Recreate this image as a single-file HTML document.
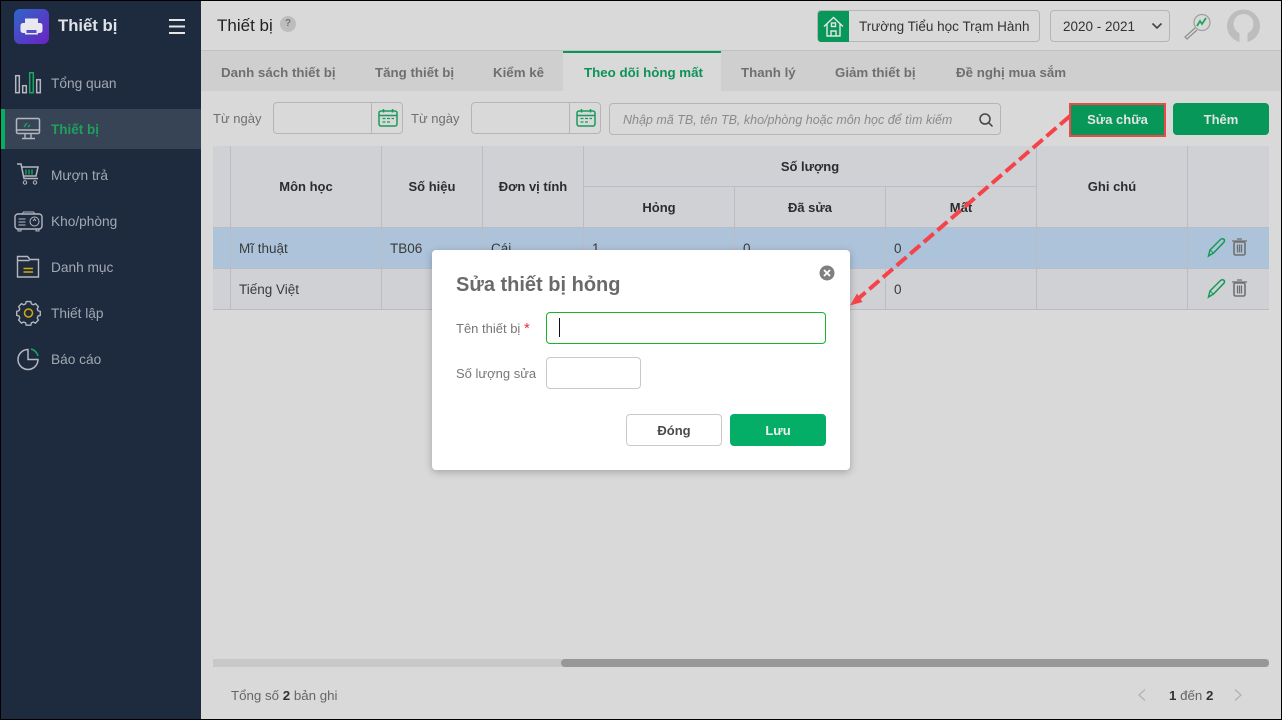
<!DOCTYPE html>
<html lang="vi"><head><meta charset="utf-8"><title>Thiết bị</title>
<style>
*{box-sizing:border-box}
html,body{margin:0;padding:0;width:1282px;height:720px;overflow:hidden;background:#d9d9d9;font-family:"Liberation Sans","DejaVu Sans",sans-serif;font-size:13.5px;color:#333}
.a{position:absolute;white-space:nowrap}
#side{position:absolute;left:1px;top:1px;width:200px;height:718px;background:#1e2b3f}
.m{position:absolute;left:51px;color:#a2a9b2;font-size:13.7px;line-height:18px;white-space:nowrap}
.ic{position:absolute;left:0;top:0}
.tab{position:absolute;top:64px;font-size:13.3px;font-weight:bold;color:#6f6f6f;line-height:18px;white-space:nowrap}
.inp{position:absolute;border:1px solid #b5b5b5;border-radius:4px;background:#d9d9d9}
.lbl{position:absolute;color:#6f6f6f;font-size:13px;line-height:18px;white-space:nowrap}
.v{position:absolute;background:#bdbcc6;width:1px}
.h{position:absolute;background:#bdbcc6;height:1px}
.th{position:absolute;font-weight:bold;color:#2c2c2c;font-size:13px;line-height:18px;text-align:center;white-space:nowrap}
.td{position:absolute;color:#3a3a3a;font-size:13.5px;line-height:18px;white-space:nowrap}
.btn{position:absolute;border-radius:4px;text-align:center;font-weight:bold;font-size:13px;color:#e4e4e4;background:#069759}
</style></head>
<body>
<div class="a" style="left:0;top:0;width:1282px;height:1px;background:#000"></div>
<div class="a" style="left:0;top:719px;width:1282px;height:1px;background:#000"></div>
<div class="a" style="left:0;top:0;width:1px;height:720px;background:#000"></div>
<div class="a" style="left:1281px;top:0;width:1px;height:720px;background:#000"></div>

<div id="side"></div>
<svg class="ic" width="201" height="380" viewBox="0 0 201 380" fill="none">
<defs><linearGradient id="g" x1="0" y1="0" x2="1" y2="1"><stop offset="0" stop-color="#2f66c8"/><stop offset="1" stop-color="#6a22c4"/></linearGradient></defs>
<rect x="14" y="9" width="35" height="35" rx="6" fill="url(#g)"/>
<path d="M25 24v-5.500h13V24z" fill="#e8e8ee"/>
<rect x="20.500" y="23" width="22" height="10" rx="2.500" fill="#e8e8ee"/>
<rect x="25" y="29" width="13" height="5.500" fill="#e8e8ee"/>
<rect x="26.500" y="30" width="10" height="3" fill="#5a4ec8"/>
<path d="M169 20h16M169 26.500h16M169 33h16" stroke="#e6e6e6" stroke-width="2"/>
<!-- Tong quan -->
<g stroke="#b4b8be" stroke-width="1.500">
<rect x="15.700" y="75.700" width="3.600" height="17"/><rect x="22.700" y="85.700" width="3.600" height="7"/><rect x="36.700" y="79.700" width="3.600" height="13"/>
</g>
<rect x="29.700" y="72.700" width="3.600" height="20" stroke="#1aa860" stroke-width="1.500"/>
<!-- active -->
<rect x="1" y="109" width="200" height="40" fill="#374455"/>
<rect x="1" y="109" width="4" height="40" fill="#06ad63"/>
<rect x="16.500" y="118.500" width="23" height="15" rx="1.500" stroke="#b4b8be" stroke-width="1.500"/>
<path d="M17 130h22M25 134v4M31 134v4M22 138.500h13" stroke="#b4b8be" stroke-width="1.400"/>
<path d="M24 127l3-4M28 127l2-2" stroke="#1aa860" stroke-width="1.400"/>
<!-- Muon tra -->
<path d="M17 164h4l3 14.500h14M22 167h16l-2 9H24" stroke="#b4b8be" stroke-width="1.500"/>
<circle cx="25" cy="182.500" r="1.700" stroke="#b4b8be"/><circle cx="35" cy="182.500" r="1.700" stroke="#b4b8be"/>
<path d="M26 169.500v5M29 169.500v5M32 169.500v5" stroke="#1aa860" stroke-width="1.400"/>
<!-- Kho/phong -->
<rect x="15" y="214" width="27" height="15" rx="3" stroke="#b4b8be" stroke-width="1.400"/>
<circle cx="34.500" cy="221.500" r="4.500" stroke="#b4b8be"/><path d="M33 221l1.500-2 1.500 2" stroke="#b4b8be"/>
<path d="M18.500 219h7M18.500 222h7M18.500 225h7M22 214l1.500-2h10l1.500 2M18 229.500v1.500h3v-1.500M36 229.500v1.500h3v-1.500" stroke="#b4b8be"/>
<!-- Danh muc -->
<path d="M17.500 277v-20.500h10l2.500 3h8.500V277zM17.500 260.500h12" stroke="#b4b8be" stroke-width="1.400"/>
<path d="M23.500 268.500h9.500M23.500 272h9.500" stroke="#d4a90c" stroke-width="1.400"/>
<!-- Thiet lap -->
<path d="M25 301.500h6l.8 3 2.600 1.200 2.800-1.500 3.800 4-1.500 2.700 1 2.600 3 .9v5.200l-3 .9-1 2.600 1.500 2.700-3.800 4-2.800-1.500-2.600 1.200-.8 3h-6l-.8-3-2.600-1.200-2.800 1.500-3.800-4 1.500-2.700-1-2.600-3-.9v-5.200l3-.9 1-2.600-1.500-2.700 3.800-4 2.800 1.500 2.600-1.200z" stroke="#b4b8be" stroke-width="1.800" transform="translate(28.5 313) scale(.76) translate(-28 -316.500)"/>
<circle cx="28.500" cy="313" r="4" stroke="#d4a90c" stroke-width="1.500"/>
<!-- Bao cao -->
<path d="M28 349.500a10 10 0 1 0 10 10H28z" stroke="#b4b8be" stroke-width="1.500"/>
<path d="M31 349a10 10 0 0 1 7 7" stroke="#1aa860" stroke-width="1.500"/>
</svg>
<div class="a" style="left:58px;top:14px;font-size:16.700px;font-weight:bold;color:#dfe3e8;line-height:24px">Thiết bị</div>
<div class="m" style="top:75px">Tổng quan</div>
<div class="m" style="top:121px;color:#1da15c;font-weight:bold;font-size:13.500px">Thiết bị</div>
<div class="m" style="top:167px">Mượn trả</div>
<div class="m" style="top:213px">Kho/phòng</div>
<div class="m" style="top:259px">Danh mục</div>
<div class="m" style="top:305px">Thiết lập</div>
<div class="m" style="top:351px">Báo cáo</div>

<!-- Header -->
<div class="a" style="left:217px;top:14px;font-size:17px;color:#222;line-height:24px">Thiết bị</div>
<div class="a" style="left:280px;top:16px;width:16px;height:16px;border-radius:50%;background:#bdbdbd;color:#757575;font-size:10px;font-weight:bold;text-align:center;line-height:16px">?</div>

<div class="a" style="left:817px;top:10px;width:223px;height:32px;border:1px solid #b5b5b5;border-radius:4px"></div>
<div class="a" style="left:818px;top:11px;width:31px;height:31px;background:#069759;border-radius:3px 0 0 3px"></div>
<svg class="a" style="left:818px;top:11px" width="31" height="31" fill="none" stroke="#e6e6e6" stroke-width="1.400"><path d="M6 15.500L15.500 6.500 25 15.500M9 13v12h13V13M13 25v-5h5v5"/><rect x="13.500" y="12" width="4" height="3.500"/></svg>
<div class="a" style="left:859px;top:18px;font-size:13.500px;line-height:18px;color:#333">Trường Tiểu học Trạm Hành</div>

<div class="a" style="left:1050px;top:10px;width:120px;height:32px;border:1px solid #b5b5b5;border-radius:4px"></div>
<div class="a" style="left:1063px;top:18px;font-size:13.500px;line-height:18px;color:#333">2020 - 2021</div>
<svg class="a" style="left:1150px;top:21px" width="14" height="10" fill="none" stroke="#444" stroke-width="1.600"><path d="M2.500 2.500L7 7l4.500-4.500"/></svg>

<svg class="a" style="left:1182px;top:12px" width="30" height="30" fill="none">
<circle cx="20" cy="10.500" r="8" stroke="#a0a0a0" stroke-width="1.300"/>
<path d="M13 16l-10 9 2 2 10-9" stroke="#8f8f8f" stroke-width="1.200"/>
<path d="M15 14l3-5 2 3 4-6" stroke="#1ba85f" stroke-width="1.800"/>
</svg>
<svg class="a" style="left:1226px;top:9px" width="35" height="35"><circle cx="17.500" cy="17" r="16.500" fill="#bdbdbd"/><circle cx="17.500" cy="15" r="10" fill="#d9d9d9"/><path d="M13.500 34l0-11h8v11z" fill="#d9d9d9"/></svg>

<!-- Tabs -->
<div class="a" style="left:201px;top:50px;width:1080px;height:1px;background:#c2c2c2"></div>
<div class="a" style="left:201px;top:51px;width:1080px;height:40px;background:#cfcfcf"></div>
<div class="a" style="left:563px;top:51px;width:158px;height:40px;background:#d9d9d9;border-top:2px solid #069759"></div>
<div class="tab" style="left:221px">Danh sách thiết bị</div>
<div class="tab" style="left:375px">Tăng thiết bị</div>
<div class="tab" style="left:493px">Kiểm kê</div>
<div class="tab" style="left:584px;color:#0d9256">Theo dõi hỏng mất</div>
<div class="tab" style="left:741px">Thanh lý</div>
<div class="tab" style="left:835px">Giảm thiết bị</div>
<div class="tab" style="left:956px">Đề nghị mua sắm</div>

<!-- Filters -->
<div class="lbl" style="left:213px;top:110px">Từ ngày</div>
<div class="inp" style="left:273px;top:102px;width:130px;height:32px"></div>
<div class="a" style="left:371px;top:102px;width:1px;height:32px;background:#b5b5b5"></div>
<div class="lbl" style="left:411px;top:110px">Từ ngày</div>
<div class="inp" style="left:471px;top:102px;width:130px;height:32px"></div>
<div class="a" style="left:569px;top:102px;width:1px;height:32px;background:#b5b5b5"></div>
<svg class="a" style="left:378px;top:108px" width="20" height="20" fill="none" stroke="#1a9a5c" stroke-width="1.500"><rect x="1" y="3" width="18" height="15" rx="2"/><path d="M1 7.500h18M5.500 1v3.500M14.500 1v3.500"/><path d="M4.500 10.500h3M9 10.500h3M13.500 10.500h2.500M4.500 14h3M9 14h3" stroke-width="1.200"/></svg>
<svg class="a" style="left:576px;top:108px" width="20" height="20" fill="none" stroke="#1a9a5c" stroke-width="1.500"><rect x="1" y="3" width="18" height="15" rx="2"/><path d="M1 7.500h18M5.500 1v3.500M14.500 1v3.500"/><path d="M4.500 10.500h3M9 10.500h3M13.500 10.500h2.500M4.500 14h3M9 14h3" stroke-width="1.200"/></svg>
<div class="inp" style="left:609px;top:103px;width:392px;height:32px"></div>
<div class="a" style="left:623px;top:111px;font-size:12.500px;font-style:italic;color:#8a8a8a;line-height:18px">Nhập mã TB, tên TB, kho/phòng hoặc môn học để tìm kiếm</div>
<svg class="a" style="left:978px;top:112px" width="16" height="16" fill="none" stroke="#444" stroke-width="1.500"><circle cx="7" cy="7" r="5"/><path d="M10.800 10.800L14.500 14.500"/></svg>

<div class="btn" style="left:1069px;top:103px;width:97px;height:34px;border:2px solid #f04848;border-radius:0;line-height:30px">Sửa chữa</div>
<div class="btn" style="left:1173px;top:103px;width:96px;height:32px;line-height:33px">Thêm</div>

<!-- Table -->
<div class="a" style="left:213px;top:146px;width:1056px;height:164px;background:#d0d1d5"></div>
<div class="a" style="left:213px;top:228px;width:1056px;height:40px;background:#adc3da"></div>
<div class="h" style="left:213px;top:227px;width:1056px"></div>
<div class="h" style="left:213px;top:268px;width:1056px"></div>
<div class="h" style="left:213px;top:309px;width:1056px"></div>
<div class="h" style="left:584px;top:186px;width:453px"></div>
<div class="v" style="left:230px;top:146px;height:164px"></div>
<div class="v" style="left:381px;top:146px;height:164px"></div>
<div class="v" style="left:482px;top:146px;height:164px"></div>
<div class="v" style="left:583px;top:146px;height:164px"></div>
<div class="v" style="left:734px;top:187px;height:123px"></div>
<div class="v" style="left:885px;top:187px;height:123px"></div>
<div class="v" style="left:1036px;top:146px;height:164px"></div>
<div class="v" style="left:1187px;top:146px;height:164px"></div>
<div class="th" style="left:231px;top:178px;width:150px">Môn học</div>
<div class="th" style="left:382px;top:178px;width:100px">Số hiệu</div>
<div class="th" style="left:483px;top:178px;width:100px">Đơn vị tính</div>
<div class="th" style="left:584px;top:158px;width:452px">Số lượng</div>
<div class="th" style="left:584px;top:199px;width:150px">Hỏng</div>
<div class="th" style="left:735px;top:199px;width:150px">Đã sửa</div>
<div class="th" style="left:886px;top:199px;width:150px">Mất</div>
<div class="th" style="left:1037px;top:178px;width:150px">Ghi chú</div>
<div class="td" style="left:239px;top:240px">Mĩ thuật</div>
<div class="td" style="left:390px;top:240px">TB06</div>
<div class="td" style="left:491px;top:240px">Cái</div>
<div class="td" style="left:592px;top:240px">1</div>
<div class="td" style="left:743px;top:240px">0</div>
<div class="td" style="left:894px;top:240px">0</div>
<div class="td" style="left:239px;top:281px">Tiếng Việt</div>
<div class="td" style="left:894px;top:281px">0</div>
<svg class="a" style="left:1205px;top:236px" width="50" height="24" fill="none"><path d="M3.500 20l1.500-6L15.500 3.500c1.500-1.500 4-.5 4 1 0 .7-.2 1.300-.7 1.800L8.500 17z" stroke="#169a58" stroke-width="1.500"/><path d="M5 14l3.500 3" stroke="#169a58"/><rect x="29" y="6" width="11" height="13" rx="1.500" stroke="#707070" stroke-width="1.600"/><path d="M27 5h15M32 3h5M32.500 8.500v8M34.500 8.500v8M36.500 8.500v8" stroke="#707070" stroke-width="1.300"/></svg>
<svg class="a" style="left:1205px;top:277px" width="50" height="24" fill="none"><path d="M3.500 20l1.500-6L15.500 3.500c1.500-1.500 4-.5 4 1 0 .7-.2 1.300-.7 1.800L8.500 17z" stroke="#169a58" stroke-width="1.500"/><path d="M5 14l3.500 3" stroke="#169a58"/><rect x="29" y="6" width="11" height="13" rx="1.500" stroke="#707070" stroke-width="1.600"/><path d="M27 5h15M32 3h5M32.500 8.500v8M34.500 8.500v8M36.500 8.500v8" stroke="#707070" stroke-width="1.300"/></svg>

<!-- Scrollbar -->
<div class="a" style="left:213px;top:659px;width:1056px;height:8px;background:#c8c8c8"></div>
<div class="a" style="left:561px;top:659px;width:708px;height:8px;background:#979797;border-radius:4px"></div>

<!-- Footer -->
<div class="a" style="left:231px;top:687px;font-size:13.300px;line-height:18px;color:#666">Tổng số <b style="color:#333">2</b> bản ghi</div>
<svg class="a" style="left:1136px;top:688px" width="12" height="14" fill="none" stroke="#b0b0b0" stroke-width="1.200"><path d="M9 1.500L3 7l6 5.500"/></svg>
<div class="a" style="left:1169px;top:687px;font-size:13.300px;line-height:18px;color:#666"><b style="color:#333">1</b> đến <b style="color:#333">2</b></div>
<svg class="a" style="left:1232px;top:688px" width="12" height="14" fill="none" stroke="#b0b0b0" stroke-width="1.200"><path d="M3 1.500L9 7l-6 5.500"/></svg>

<!-- Modal -->
<div class="a" style="left:432px;top:250px;width:418px;height:220px;background:#fff;border-radius:4px;box-shadow:0 2px 8px rgba(0,0,0,.25)"></div>
<div class="a" style="left:456px;top:271px;font-size:20px;font-weight:bold;color:#6a6a6a;line-height:28px">Sửa thiết bị hỏng</div>
<svg class="a" style="left:819px;top:265px" width="16" height="16" fill="none"><circle cx="8" cy="8" r="7.500" fill="#7f7f7f"/><path d="M5 5l6 6M11 5l-6 6" stroke="#fff" stroke-width="1.800"/></svg>
<div class="lbl" style="left:456px;top:320px;color:#777">Tên thiết bị <span style="color:#e8323c;font-size:15px">*</span></div>
<div class="a" style="left:546px;top:312px;width:280px;height:32px;border:1px solid #17b42c;border-radius:4px"></div>
<div class="a" style="left:559px;top:318px;width:1px;height:19px;background:#111"></div>
<div class="lbl" style="left:456px;top:365px;color:#777">Số lượng sửa</div>
<div class="a" style="left:546px;top:357px;width:95px;height:32px;border:1px solid #c9c9c9;border-radius:4px"></div>
<div class="a" style="left:626px;top:414px;width:96px;height:32px;border:1px solid #c9c9c9;border-radius:4px;text-align:center;line-height:31px;font-weight:bold;font-size:13px;color:#4a4a4a;background:#fff">Đóng</div>
<div class="a" style="left:730px;top:414px;width:96px;height:32px;border-radius:4px;text-align:center;line-height:33px;font-weight:bold;font-size:13px;color:#f0f0f0;background:#04ae67">Lưu</div>

<!-- Arrow -->
<svg class="a" style="left:0;top:0" width="1282" height="720" fill="none">
<path d="M1070 116L859 298" stroke="#f5434a" stroke-width="4" stroke-dasharray="13 5"/>
<path d="M850 305.500L857 293.500 862.500 302z" fill="#f5434a"/>
</svg>
</body></html>
